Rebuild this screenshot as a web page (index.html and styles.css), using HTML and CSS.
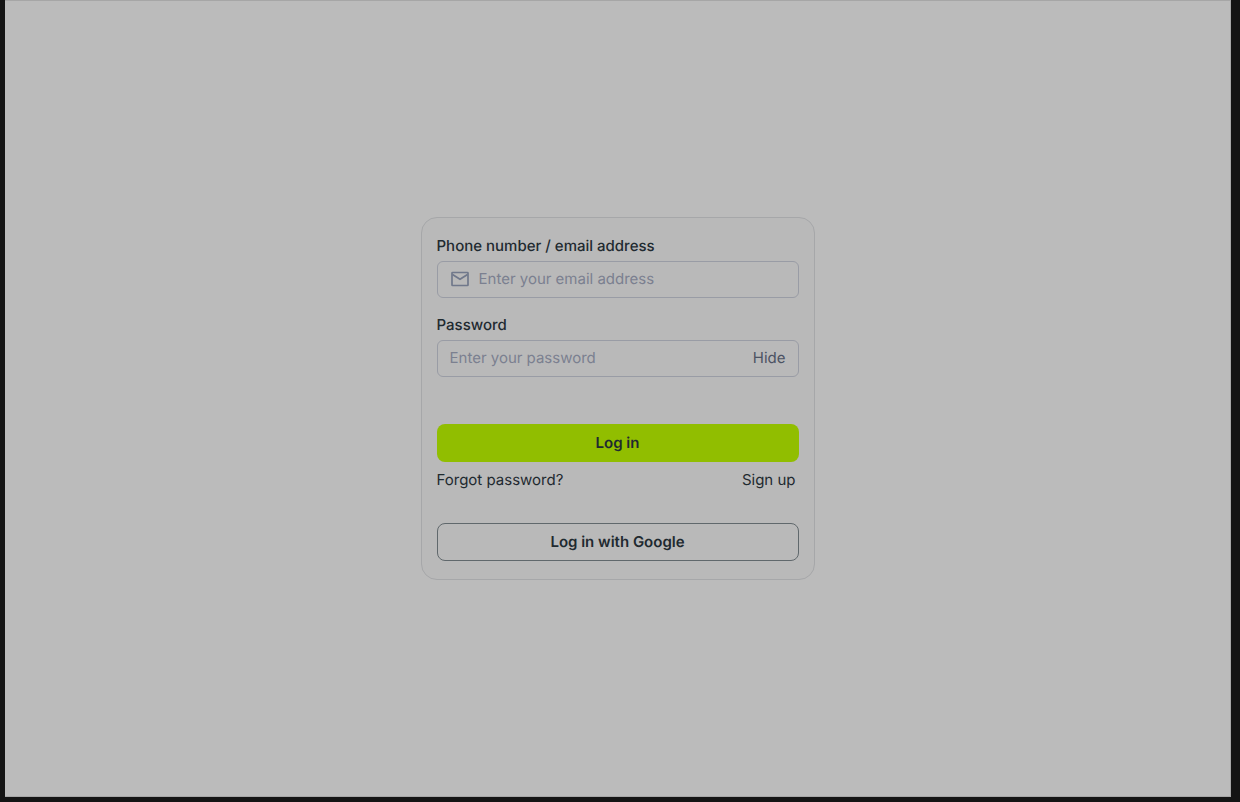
FILE: index.html
```
<!DOCTYPE html>
<html lang="en">
<head>
    <meta charset="UTF-8">
    <meta name="viewport" content="width=device-width, initial-scale=1.0">
    <title>Log in</title>
    <link rel="stylesheet" href="styles.css">
</head>
<body>
    <main class="page">
        <form class="card">
            <div class="field">
                <label for="email">Phone number / email address</label>
                <div class="input-box">
                    <svg class="mail-icon" viewBox="0 0 20 20" fill="none" stroke="currentColor" stroke-width="1.7" stroke-linejoin="round" aria-hidden="true">
                        <rect x="2" y="3.5" width="16" height="13" rx="0.6"/>
                        <path d="M2.5 5.5L10 10.3L17.5 5.5"/>
                    </svg>
                    <input type="text" id="email" placeholder="Enter your email address">
                </div>
            </div>
            <div class="field">
                <label for="password">Password</label>
                <div class="input-box">
                    <input type="password" id="password" placeholder="Enter your password">
                    <button type="button" class="toggle">Hide</button>
                </div>
            </div>
            <button type="submit" class="btn btn-primary">Log in</button>
            <div class="links">
                <a href="#">Forgot password?</a>
                <a href="#">Sign up</a>
            </div>
            <button type="button" class="btn btn-outline">Log in with Google</button>
        </form>
    </main>
</body>
</html>
```

FILE: styles.css
```
* {
    box-sizing: border-box;
}
body {
    margin: 0;
    min-height: 100vh;
    display: flex;
    padding: 0 9px 5px 5px;
    background: #141414;
    color: #1f2a30;
    font-family: Inter, sans-serif;
    font-size: 15px;
    line-height: 20px;
    text-rendering: geometricPrecision;
}
.page {
    flex: 1;
    display: flex;
    justify-content: center;
    align-items: center;
    padding-bottom: 1px;
    background: #bbbbbb;
    border: 1px solid #a6a6a6;
    border-width: 1px 1px 1px 0;
}
.card {
    width: 100%;
    max-width: 394px;
    padding: 18px 15px;
    background: #b9b9b9;
    border: 1px solid #a6a7a9;
    border-radius: 16px;
}
.field {
    margin-bottom: 17px;
}
.field label {
    display: block;
    margin-bottom: 5px;
    font-weight: 500;
}
.input-box {
    display: flex;
    align-items: center;
    height: 37px;
    padding: 0 12px;
    border: 1px solid #999ca5;
    border-radius: 6px;
}
.mail-icon {
    flex: none;
    width: 20px;
    height: 20px;
    margin-right: 9px;
    color: #70788b;
}
.input-box input {
    flex: 1;
    min-width: 0;
    padding: 0;
    border: none;
    outline: none;
    background: none;
    color: inherit;
    font: inherit;
    text-rendering: inherit;
}
.input-box input::placeholder {
    color: #7b8090;
    opacity: 1;
}
.toggle {
    padding: 0;
    border: none;
    background: none;
    color: #4c5363;
    font: inherit;
    text-rendering: inherit;
    cursor: pointer;
}
.btn {
    display: block;
    width: 100%;
    height: 38px;
    border: none;
    border-radius: 8px;
    background: none;
    color: inherit;
    font: inherit;
    font-weight: 600;
    text-rendering: inherit;
    cursor: pointer;
}
.btn-primary {
    margin-top: 47px;
    background: #91be00;
}
.btn-outline {
    border: 1px solid #60686c;
}
.links {
    display: flex;
    justify-content: space-between;
    margin: 8px 3px 33px 0;
}
.links a {
    color: inherit;
    text-decoration: none;
}
```
